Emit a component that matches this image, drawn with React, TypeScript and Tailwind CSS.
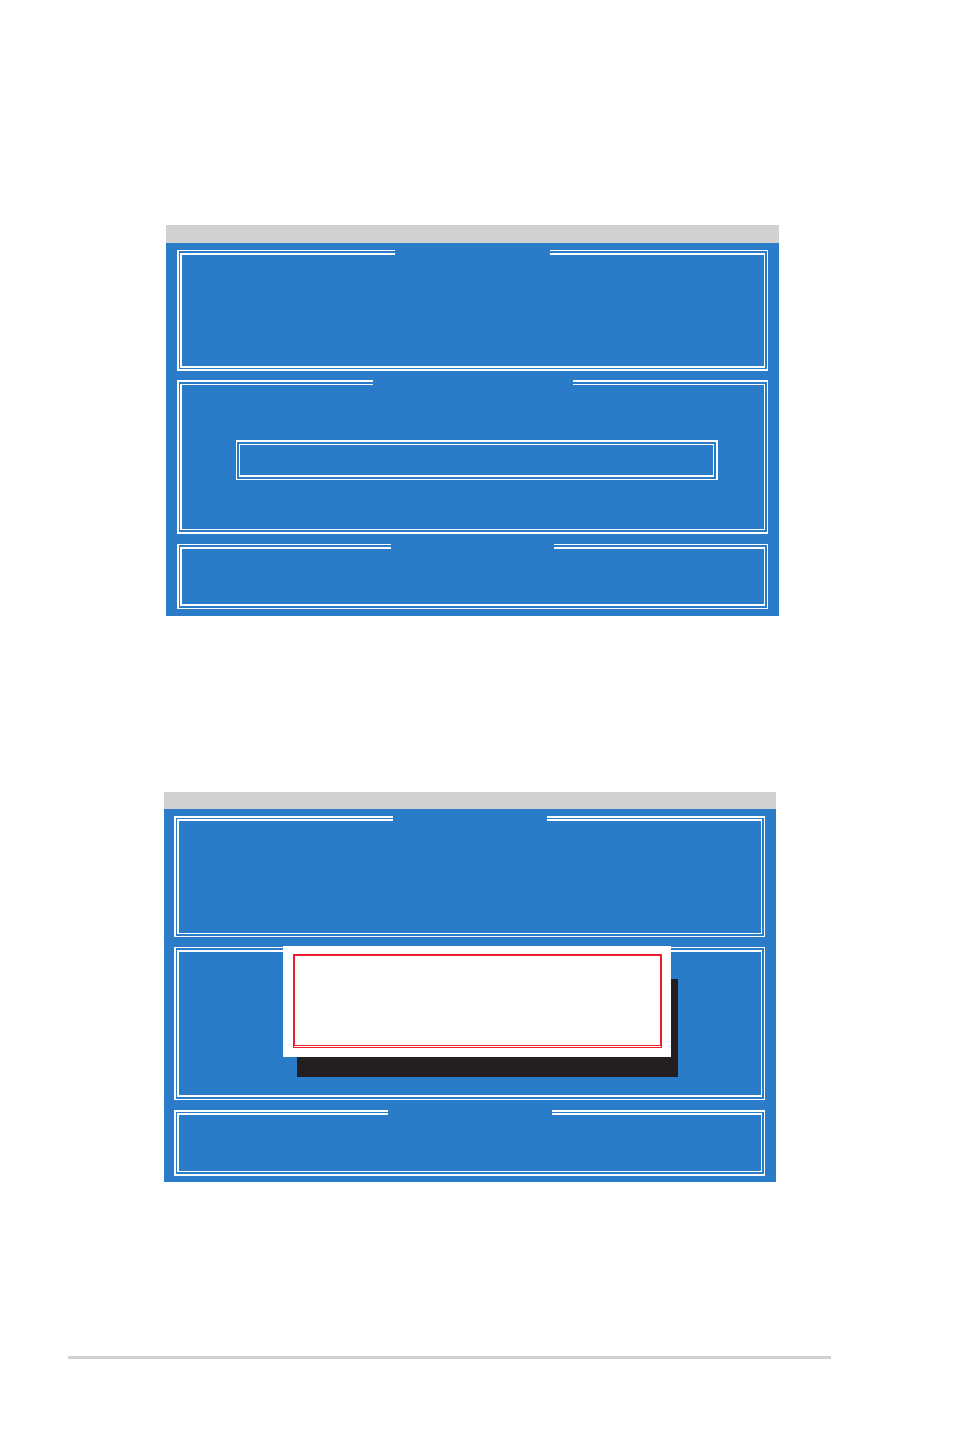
import type { ReactNode } from "react";
import clsx from "clsx";

type FrameProps = {
  outer: string;
  inner: string;
  notch?: string;
  className?: string;
  children?: ReactNode;
};

// Double-line frame; the optional notch leaves room for a title in the top lines.
function Frame({ outer, inner, notch, className, children }: FrameProps) {
  return (
    <section className={clsx("relative grid", className)}>
      <div className={clsx("col-start-1 row-start-1 grid border-white", outer)}>
        <div className={clsx("border-white", inner)}>{children}</div>
      </div>
      {notch && (
        <div
          className={clsx(
            "relative col-start-1 row-start-1 h-[5px] self-start justify-self-center bg-[#2a7bc8]",
            notch,
          )}
        />
      )}
    </section>
  );
}

function ProgressBox() {
  return (
    <div className="pt-[55px] pr-[46px] pb-[49px] pl-[54px]">
      <Frame
        className="h-10"
        outer="border-t-2 border-r-2 border-b border-l p-[2px]"
        inner="border-t border-r border-b-2 border-l"
      />
    </div>
  );
}

function Dialog() {
  return (
    <>
      <div className="absolute top-8 right-[87px] left-[123px] h-[98px] bg-[#231f20]" />
      <div
        role="dialog"
        className="absolute -top-px right-[94px] left-[109px] grid h-[111px] bg-white pt-2 pr-[9px] pb-[9px] pl-[10px]"
      >
        <div className="grid border border-[#ed1c2a] pb-px">
          <div className="border border-[#ed1c2a]" />
        </div>
      </div>
    </>
  );
}

export default function App() {
  return (
    <main className="bg-white pt-[225px] pb-[78px] font-['Liberation_Sans',sans-serif]">
      <article className="mr-[175px] ml-[166px] bg-[#2a7bc8]">
        <header className="h-[18px] bg-[#d1d1d1]" />
        <div className="px-[11px] py-[7px]">
          <Frame
            className="h-[121px]"
            outer="border-t border-r border-b-2 border-l-2 pt-[2px] pr-[2px] pb-px pl-px"
            inner="border-t-2 border-r border-b-2 border-l-2"
            notch="w-[155px]"
          />
          <Frame
            className="mt-[9px]"
            outer="border-t-2 border-r border-b-2 border-l-2 pt-[2px] pr-[2px] pb-[2px] pl-px"
            inner="border-t border-r border-b border-l-2"
            notch="w-[200px]"
          >
            <ProgressBox />
          </Frame>
          <Frame
            className="mt-[10px] h-[65px]"
            outer="border-t border-r border-b border-l-2 pt-[2px] pr-[2px] pb-[2px] pl-px"
            inner="border-t-2 border-r border-b-2 border-l-2"
            notch="w-[163px]"
          />
        </div>
      </article>

      <article className="mt-44 mr-[178px] ml-[164px] bg-[#2a7bc8]">
        <header className="h-[17px] bg-[#d1d1d1]" />
        <div className="pt-[7px] pr-[11px] pb-[6px] pl-[10px]">
          <Frame
            className="h-[121px]"
            outer="border-t-2 border-r border-b border-l-2 pt-px pr-[2px] pb-[2px] pl-px"
            inner="border-t-2 border-r border-b border-l-2"
            notch="w-[154px]"
          />
          <div className="relative mt-[10px]">
            <Frame
              className="h-[153px]"
              outer="border-t border-r border-b border-l-2 pt-[2px] pr-[2px] pb-[2px] pl-px"
              inner="border-t-2 border-r border-b-2 border-l-2"
              notch="w-[200px]"
            />
            <Dialog />
          </div>
          <Frame
            className="mt-[10px] h-[66px]"
            outer="border-t-2 border-r border-b-2 border-l-2 pt-px pr-[2px] pb-[2px] pl-px"
            inner="border-t-2 border-r border-b border-l-2"
            notch="w-[164px]"
          />
        </div>
      </article>

      <hr className="mt-[174px] mr-[123px] ml-[68px] h-[3px] border-0 bg-[#d1d1d1]" />
    </main>
  );
}
